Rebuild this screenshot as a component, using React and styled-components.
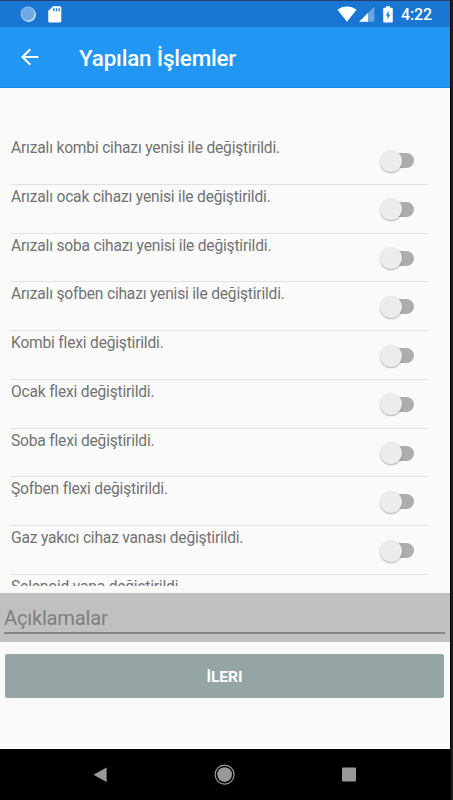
import React, { useState } from 'react'
import styled, { createGlobalStyle } from 'styled-components'

const operations = [
   'Arızalı kombi cihazı yenisi ile değiştirildi.',
   'Arızalı ocak cihazı yenisi ile değiştirildi.',
   'Arızalı soba cihazı yenisi ile değiştirildi.',
   'Arızalı şofben cihazı yenisi ile değiştirildi.',
   'Kombi flexi değiştirildi.',
   'Ocak flexi değiştirildi.',
   'Soba flexi değiştirildi.',
   'Şofben flexi değiştirildi.',
   'Gaz yakıcı cihaz vanası değiştirildi.',
   'Selenoid vana değiştirildi.',
]

function StatusIcons() {
   return (
      <StatusBar>
         <svg width="17" height="17" viewBox="0 0 17 17">
            <circle cx="8.6" cy="8.6" r="7.3" fill="#dcebfa" />
            <circle cx="7.8" cy="7.8" r="6.9" fill="#6fa9e4" />
            <circle cx="7.8" cy="7.8" r="6.7" fill="none" stroke="#a3c9ef" strokeWidth="1.2" strokeDasharray="1 0.7" />
         </svg>
         <SdCard width="14" height="17" viewBox="0 0 14 17">
            <path
               d="M5 .3h6.8A1.5 1.5 0 0 1 13.3 1.8v13.1a1.5 1.5 0 0 1-1.5 1.5H1.7A1.5 1.5 0 0 1 .2 14.9V5.1z"
               fill="#fff"
            />
            <path d="M5.9 2.3v3M8.5 2.3v3M11.1 2.3v3" stroke="#1976d2" strokeWidth="1.3" />
         </SdCard>
         <Spacer />
         <svg width="20" height="16" viewBox="0 0 20 16">
            <path d="M.5 3.8C5.8-.7 14.2-.7 19.5 3.8L10 15.8z" fill="#fff" />
         </svg>
         <Signal width="16" height="16" viewBox="0 0 16 16">
            <path d="M15.3.8v15H.2z" fill="#6ca6e1" />
            <path d="M9 7v8.8H.2z" fill="#fff" />
         </Signal>
         <Battery width="10" height="17" viewBox="0 0 10 17">
            <path d="M3 .2h4v1.6h1.8q1 0 1 1v12.7q0 1-1 1H1.2q-1 0-1-1V2.8q0-1 1-1H3z" fill="#fff" />
            <path d="M5.7 4.7 2.8 9.4h1.7v3.9l2.8-4.8H5.5z" fill="#1976d2" />
         </Battery>
         <Clock>4:22</Clock>
      </StatusBar>
   )
}

function Operation({ label }) {
   const [checked, setChecked] = useState(false)
   return (
      <Row>
         <Label>{label}</Label>
         <Switch role="switch" aria-checked={checked} aria-label={label} onClick={() => setChecked(!checked)}>
            <Thumb $checked={checked} />
         </Switch>
      </Row>
   )
}

function App() {
   return (
      <Device>
         <GlobalStyle />
         <Screen>
            <StatusIcons />
            <AppBar>
               <svg width="18" height="18" viewBox="0 0 18 18">
                  <path d="M17.3 9H1.8M9.3 1.2 1.5 9l7.8 7.8" fill="none" stroke="#fff" strokeWidth="2.1" />
               </svg>
               <Title>Yapılan İşlemler</Title>
            </AppBar>
            <List>
               {operations.map((label) => (
                  <Operation key={label} label={label} />
               ))}
            </List>
            <Notes>
               <NotesInput placeholder="Açıklamalar" />
            </Notes>
            <NextButton>İLERI</NextButton>
            <NavBar>
               <svg width="14" height="16" viewBox="0 0 14 16">
                  <path d="M13.6.5v14.4L.5 7.7z" fill="#999" />
               </svg>
               <svg width="22" height="22" viewBox="0 0 22 22">
                  <circle cx="10.6" cy="10.6" r="9.5" fill="none" stroke="#999" strokeWidth="1.2" />
                  <circle cx="10.6" cy="10.6" r="7.4" fill="#999" />
               </svg>
               <svg width="14" height="15" viewBox="0 0 14 15">
                  <rect y=".5" width="14" height="14" rx="1" fill="#999" />
               </svg>
            </NavBar>
         </Screen>
      </Device>
   )
}

export default App

const GlobalStyle = createGlobalStyle`
   * {
      box-sizing: border-box;
   }
   body {
      margin: 0;
      font-family: Roboto, sans-serif;
   }
`
const Device = styled.div`
   width: 453px;
   height: 800px;
   background: #1c1c1c;
   overflow: hidden;
`
const Screen = styled.div`
   display: flex;
   flex-direction: column;
   width: 451px;
   height: 800px;
   border-right: 1px solid #000;
   background: #fafafa;
`
const StatusBar = styled.div`
   display: flex;
   align-items: center;
   flex: none;
   height: 27px;
   padding: 0 18px 0 20px;
   border-top: 1px solid #27406a;
   background: #1976d2;
   svg {
      flex: none;
   }
`
const SdCard = styled.svg`
   margin-left: 11px;
`
const Spacer = styled.div`
   flex: 1;
`
const Signal = styled.svg`
   margin-left: 2px;
`
const Battery = styled.svg`
   margin-left: 8px;
`
const Clock = styled.span`
   margin: 2px 0 0 8px;
   color: #fff;
   font-size: 16px;
   font-weight: 500;
   letter-spacing: -0.1px;
   line-height: 24px;
`
const AppBar = styled.header`
   display: flex;
   align-items: center;
   flex: none;
   height: 61px;
   padding-left: 21px;
   border-bottom: 1px solid #1b87e5;
   background: #2196f3;
`
const Title = styled.h1`
   margin: 2px 0 0 40px;
   color: #fff;
   font-size: 22.4px;
   font-weight: 500;
   letter-spacing: -0.18px;
   line-height: 28px;
`
const List = styled.div`
   flex: none;
   height: 498px;
   padding: 48px 22px 0 11px;
   overflow: hidden;
`
const Row = styled.div`
   display: flex;
   justify-content: space-between;
   height: 48.75px;
   padding-right: 14px;
   border-bottom: 1px solid #e1e1e1;
`
const Label = styled.span`
   color: #737373;
   font-size: 15.6px;
   letter-spacing: -0.2px;
   line-height: 24px;
   white-space: nowrap;
`
const Switch = styled.button`
   display: flex;
   align-items: center;
   width: 31px;
   height: 15px;
   margin: 17px 0 0;
   padding: 0;
   border: none;
   border-radius: 8px;
   background: #adadad;
   cursor: pointer;
`
const Thumb = styled.span`
   flex: none;
   width: 22px;
   height: 22px;
   border-radius: 50%;
   background: #ececec;
   box-shadow: 0 1px 1.5px rgba(0, 0, 0, 0.3);
   transform: translateX(${({ $checked }) => ($checked ? '12px' : '-3px')});
   transition: transform 0.2s ease-in;
`
const Notes = styled.div`
   flex: none;
   height: 49px;
   margin-top: 7px;
   padding: 0 5px 0 4px;
   background: #c0c0c0;
`
const NotesInput = styled.input`
   display: block;
   width: 100%;
   height: 41px;
   padding: 11px 0 0;
   border: none;
   border-bottom: 2px solid #868686;
   outline: none;
   background: transparent;
   color: #333;
   font-family: inherit;
   font-size: 20.2px;
   letter-spacing: -0.25px;
   &::placeholder {
      color: #7f7f7f;
      opacity: 1;
   }
`
const NextButton = styled.button`
   flex: none;
   height: 44px;
   margin: 12px 6px 0 5px;
   padding: 2px 0 0;
   border: none;
   border-radius: 2px;
   background: #95a5a5;
   color: #fff;
   font-family: inherit;
   font-size: 15.5px;
   font-weight: 700;
   cursor: pointer;
`
const NavBar = styled.nav`
   display: flex;
   align-items: center;
   justify-content: space-between;
   flex: none;
   height: 51px;
   margin-top: auto;
   padding: 0 94px 0 93px;
   background: #000;
`
